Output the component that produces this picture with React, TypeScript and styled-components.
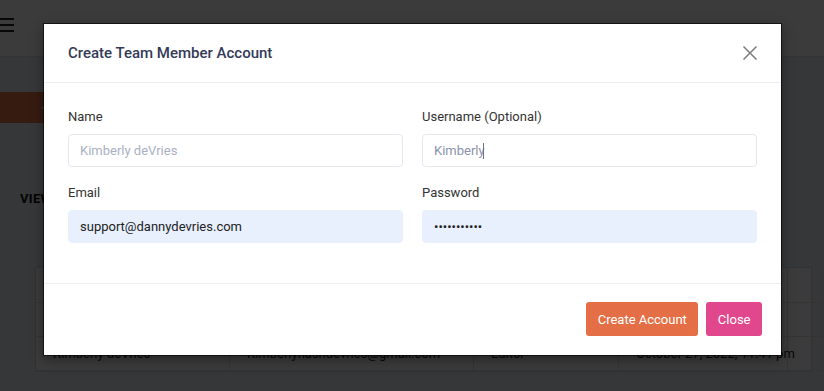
import styled, { createGlobalStyle } from "styled-components";

const GlobalStyle = createGlobalStyle`
  * {
    box-sizing: border-box;
  }
  body {
    margin: 0;
    font-family: Roboto, "Liberation Sans", sans-serif;
    background: #e9ebef;
  }
`;

const Page = styled.div`
  position: relative;
  width: 824px;
  height: 391px;
  overflow: hidden;
  background: #e9ebef;
`;

const TopBar = styled.header`
  display: flex;
  align-items: center;
  height: 57px;
  background: #fff;
  border-bottom: 1px solid #dcdfe4;
`;

const Burger = styled.svg`
  width: 16px;
  height: 14px;
  margin-left: -2px;
  margin-bottom: 6px;
`;

const Content = styled.main`
  display: flex;
  flex-direction: column;
  padding: 35px 12px 0 0;
`;

const AddButton = styled.button`
  width: 180px;
  height: 31px;
  padding-left: 41px;
  border: none;
  border-radius: 0 4px 4px 0;
  background: #e8744a;
  color: #fff;
  font-family: Roboto, sans-serif;
  font-size: 13px;
  text-align: left;
`;

const Heading = styled.h2`
  margin: 68px 0 0 20px;
  font-family: Roboto, sans-serif;
  font-size: 13px;
  font-weight: 700;
  letter-spacing: 0.3px;
  color: #111;
`;

const Table = styled.div`
  display: grid;
  grid-template-columns: 194px 244px 145px 169px 1fr;
  margin: 61px 0 0 35px;
  background: #fff;
  border: 1px solid #d5d8de;
  font-size: 13px;
  color: #222;
`;

const Cell = styled.div<{ $head?: boolean }>`
  height: ${(p) => (p.$head ? "35px" : "34px")};
  padding: 0 17px;
  display: flex;
  align-items: center;
  white-space: nowrap;
  border-right: 1px solid #dfe2e6;
  border-bottom: 1px solid #dfe2e6;
  font-weight: ${(p) => (p.$head ? 600 : 400)};
`;

const Overlay = styled.div`
  position: absolute;
  inset: 0;
  display: flex;
  align-items: flex-start;
  padding: 24px 0 0 44px;
  background: rgba(0, 0, 0, 0.77);
`;

const Modal = styled.section`
  width: 737px;
  background: #fff;
  box-shadow: 0 0 0 1px rgba(0, 0, 0, 0.6), 0 4px 12px rgba(0, 0, 0, 0.4);
`;

const ModalHeader = styled.div`
  display: flex;
  align-items: center;
  justify-content: space-between;
  height: 59px;
  padding: 0 22px 0 24px;
  border-bottom: 1px solid #eceef4;
`;

const Title = styled.h1`
  margin: 0;
  font-size: 15px;
  font-weight: 500;
  color: #343a58;
`;

const CloseIcon = styled.button`
  display: flex;
  padding: 0;
  border: none;
  background: none;
  color: #7c7c7c;
`;

const ModalBody = styled.div`
  display: grid;
  grid-template-columns: 335px 335px;
  column-gap: 19px;
  row-gap: 17px;
  padding: 25px 24px 40px;
  border-bottom: 1px solid #eceef2;
`;

const Group = styled.label`
  display: flex;
  flex-direction: column;
  gap: 8px;
`;

const Label = styled.span`
  font-size: 13px;
  line-height: 18px;
  color: #333;
`;

const InputWrap = styled.div`
  position: relative;
  display: flex;
`;

const Input = styled.input<{ $filled?: boolean; $muted?: boolean }>`
  flex: 1;
  height: 33px;
  padding: 0 11px;
  border: 1px solid ${(p) => (p.$filled ? "#e8f0fe" : "#e6e8ee")};
  border-radius: 4px;
  background: ${(p) => (p.$filled ? "#e8f0fe" : "#fff")};
  font-family: Roboto, sans-serif;
  font-size: 13px;
  color: ${(p) => (p.$muted ? "#8c92ab" : "#222")};
  outline: none;

  &::placeholder {
    color: #aab0c4;
  }
`;

const Caret = styled.span`
  position: absolute;
  top: 9px;
  left: 61px;
  width: 1px;
  height: 16px;
  background: #6c7290;
`;

const ModalFooter = styled.div`
  display: flex;
  justify-content: flex-end;
  gap: 8px;
  padding: 18px 19px 19px 24px;
`;

const Button = styled.button<{ $tone: "orange" | "pink" }>`
  height: 34px;
  padding: 0 11.5px;
  border: none;
  border-radius: 3px;
  background: ${(p) => (p.$tone === "orange" ? "#e46f46" : "#e0478d")};
  color: #fff;
  font-family: Roboto, sans-serif;
  font-size: 13px;
  cursor: pointer;
`;

const columns = ["Name", "Email", "Role", "Date Added", ""];
const rows = [
  ["Danny deVries", "support@dannydevries.com", "Admin", "May 3, 2022, 9:12 am", ""],
  ["Kimberly deVries", "Kimberlynashdevries@gmail.com", "Editor", "October 27, 2022, 11:41 pm", ""],
];

export default function App() {
  return (
    <>
      <GlobalStyle />
      <Page>
        <TopBar>
          <Burger viewBox="0 0 16 14">
            <path d="M0 1h16M0 7h16M0 13h16" stroke="#222" strokeWidth="2" />
          </Burger>
        </TopBar>
        <Content>
          <AddButton>+ Add Team Member</AddButton>
          <Heading>VIEW TEAM MEMBERS</Heading>
          <Table>
            {columns.map((c, i) => (
              <Cell key={i} $head>
                {c}
              </Cell>
            ))}
            {rows.map((r, i) =>
              r.map((v, j) => <Cell key={`${i}-${j}`}>{v}</Cell>)
            )}
          </Table>
        </Content>

        <Overlay>
          <Modal>
            <ModalHeader>
              <Title>Create Team Member Account</Title>
              <CloseIcon aria-label="Close">
                <svg width="18" height="18" viewBox="0 0 18 18">
                  <path
                    d="M2.5 2.5l13 13M15.5 2.5l-13 13"
                    stroke="currentColor"
                    strokeWidth="1.5"
                  />
                </svg>
              </CloseIcon>
            </ModalHeader>
            <ModalBody>
              <Group>
                <Label>Name</Label>
                <InputWrap>
                  <Input placeholder="Kimberly deVries" readOnly />
                </InputWrap>
              </Group>
              <Group>
                <Label>Username (Optional)</Label>
                <InputWrap>
                  <Input defaultValue="Kimberly" $muted readOnly />
                  <Caret />
                </InputWrap>
              </Group>
              <Group>
                <Label>Email</Label>
                <InputWrap>
                  <Input defaultValue="support@dannydevries.com" $filled readOnly />
                </InputWrap>
              </Group>
              <Group>
                <Label>Password</Label>
                <InputWrap>
                  <Input type="password" defaultValue="dannydevrie" $filled readOnly />
                </InputWrap>
              </Group>
            </ModalBody>
            <ModalFooter>
              <Button $tone="orange">Create Account</Button>
              <Button $tone="pink">Close</Button>
            </ModalFooter>
          </Modal>
        </Overlay>
      </Page>
    </>
  );
}
